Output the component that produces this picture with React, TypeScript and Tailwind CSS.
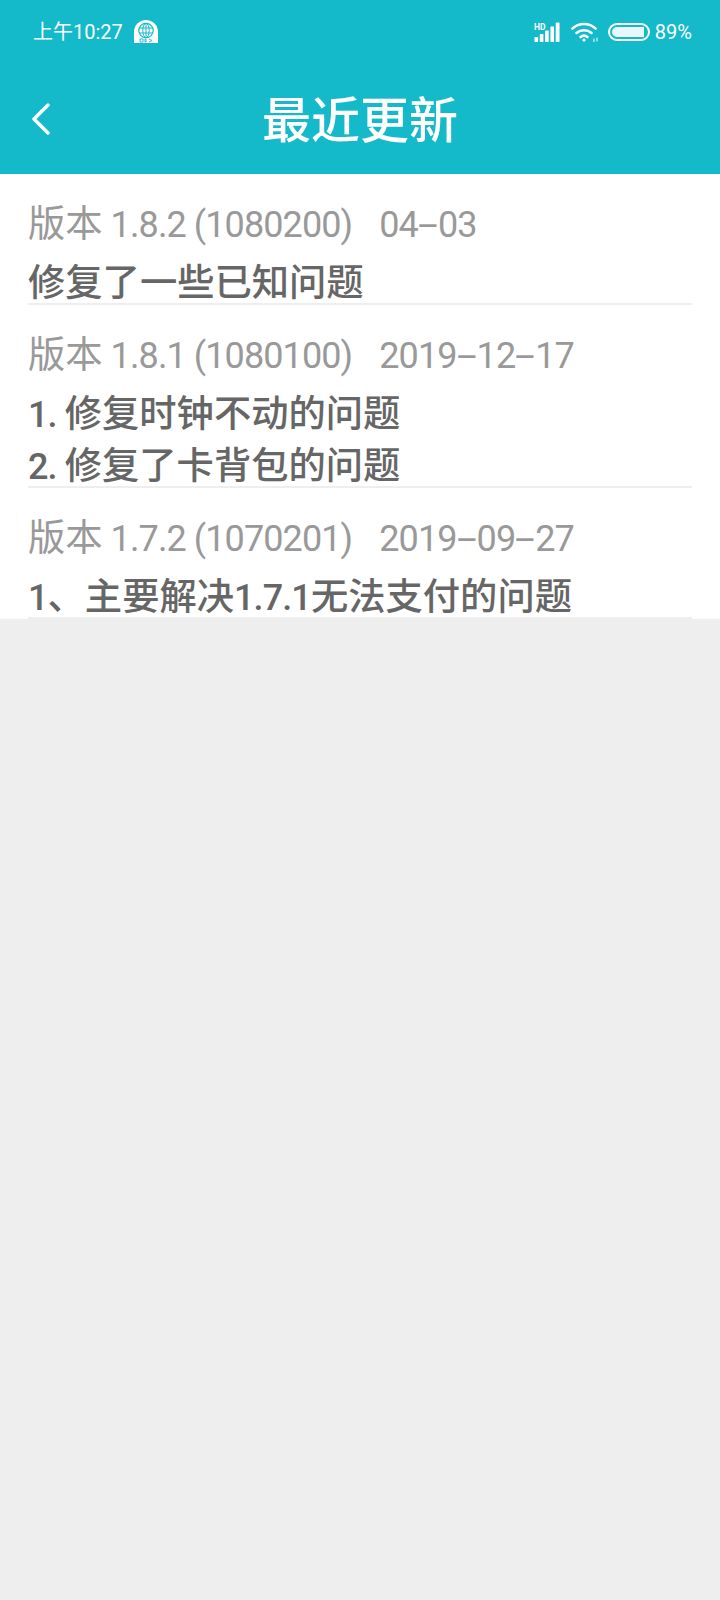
const font = { fontFamily: 'Roboto, "Noto Sans CJK SC", sans-serif' };

const entries = [
  { title: "版本 1.8.2 (1080200)", date: "04-03", lines: ["修复了一些已知问题"] },
  { title: "版本 1.8.1 (1080100)", date: "2019-12-17", lines: ["1. 修复时钟不动的问题", "2. 修复了卡背包的问题"] },
  { title: "版本 1.7.2 (1070201)", date: "2019-09-27", lines: ["1、主要解决1.7.1无法支付的问题"] },
];

/* CJK runs are set a little larger than Latin runs, as in the reference's system font. */
function Mixed({ text }: { text: string }) {
  const runs = text.match(/[\u3000-\u9fff]+|-|[^\u3000-\u9fff-]+/g) ?? [];
  return (
    <>
      {runs.map((r, i) =>
        r === "-" ? (
          <span key={i} className="inline-block w-[20px] scale-x-[2] text-center text-[36px]">-</span>
        ) : /[\u3000-\u9fff]/.test(r) ? (
          <span key={i} className="text-[37.3px]">{r}</span>
        ) : (
          <span key={i} className="whitespace-pre text-[36px] tracking-[-0.9px]">{r}</span>
        ),
      )}
    </>
  );
}

function GlobeBadge() {
  return (
    <svg width="24" height="24" viewBox="0 0 24 24" fill="none">
      <path d="M0 23V12a12 12 0 0 1 24 0v11z" fill="#fff" />
      <circle cx="12" cy="10.5" r="7.2" stroke="#14b9ca" strokeWidth="1.2" />
      <ellipse cx="12" cy="10.5" rx="3.2" ry="7.2" stroke="#14b9ca" strokeWidth="1" />
      <path d="M5 8h14M5 13h14M12 3v15" stroke="#14b9ca" strokeWidth="1" />
      <path d="M6 19h3v3H6zM11 19h1v3h-1zM15 19l3 1.5-3 1.5" stroke="#14b9ca" strokeWidth="0.9" />
    </svg>
  );
}

function Signal() {
  return (
    <svg width="27" height="20" viewBox="0 0 27 20" fill="#fff">
      <rect x="0.5" y="15" width="3.6" height="5" rx="0.6" />
      <rect x="5.8" y="12" width="3.6" height="8" rx="0.6" />
      <rect x="11.1" y="8.5" width="3.6" height="11.5" rx="0.6" />
      <rect x="16.4" y="4.5" width="3.6" height="15.5" rx="0.6" />
      <rect x="21.7" y="0.5" width="3.8" height="19.5" rx="0.6" />
      <text x="0" y="7.5" fontSize="8.5" fontWeight="700" fontFamily="Roboto, sans-serif">HD</text>
    </svg>
  );
}

function Wifi() {
  return (
    <svg width="28" height="20" viewBox="0 0 28 20" fill="none" stroke="#fff" strokeWidth="2.6" strokeLinecap="round">
      <path d="M1.5 6.5a17 17 0 0 1 23 0" />
      <path d="M5.5 11a11.5 11.5 0 0 1 15 0" />
      <path d="M9.5 15a5.5 5.5 0 0 1 7 0" />
      <circle cx="13" cy="18" r="1.6" fill="#fff" stroke="none" />
      <path d="M23 17v3M26 16v3" strokeWidth="1" />
    </svg>
  );
}

function Battery() {
  return (
    <div className="flex h-[18px] w-[42px] items-center rounded-full border-2 border-white p-[2px]">
      <div className="h-full w-[32px] rounded-l-full rounded-r-[3px] bg-[#e6f8fa]" />
    </div>
  );
}

export default function App() {
  return (
    <div className="flex min-h-[1600px] w-[720px] flex-col bg-[#eeeeee]" style={font}>
      <header className="flex h-[174px] flex-col bg-[#14b9ca] text-white">
        <div className="flex h-[64px] items-center justify-between pl-[33px] pr-[28px]">
          <div className="flex items-center gap-[11px]">
            <span className="text-[20px] leading-none">上午10:27</span>
            <GlobeBadge />
          </div>
          <div className="flex items-center">
            <Signal />
            <div className="ml-[10px]"><Wifi /></div>
            <div className="ml-[9px]"><Battery /></div>
            <span className="ml-[5px] text-[20px] leading-none">89%</span>
          </div>
        </div>
        <div className="relative flex flex-1 items-center justify-center">
          <svg className="absolute left-[32px] top-1/2 -translate-y-1/2" width="18" height="32" viewBox="0 0 18 32" fill="none" stroke="#fff" strokeWidth="3.4" strokeLinecap="round" strokeLinejoin="round">
            <path d="M16 2 2 16l14 14" />
          </svg>
          <h1 className="mt-[4px] text-[49px] font-medium leading-none">最近更新</h1>
        </div>
      </header>
      <main className="bg-white px-[28px]">
        {entries.map((e) => (
          <section key={e.title} className="border-b-2 border-[#eeeeee] pt-[26px]">
            <div className="flex h-[50px] items-center gap-[27px] text-[#999999]">
              <span><Mixed text={e.title} /></span>
              <span><Mixed text={e.date} /></span>
            </div>
            <div className="mt-[10px] flex flex-col gap-[6px]">
              {e.lines.map((l) => (
                <p key={l} className="h-[46px] font-medium leading-[46px] text-[#666666] last:-mb-[3px]"><Mixed text={l} /></p>
              ))}
            </div>
          </section>
        ))}
      </main>
    </div>
  );
}
